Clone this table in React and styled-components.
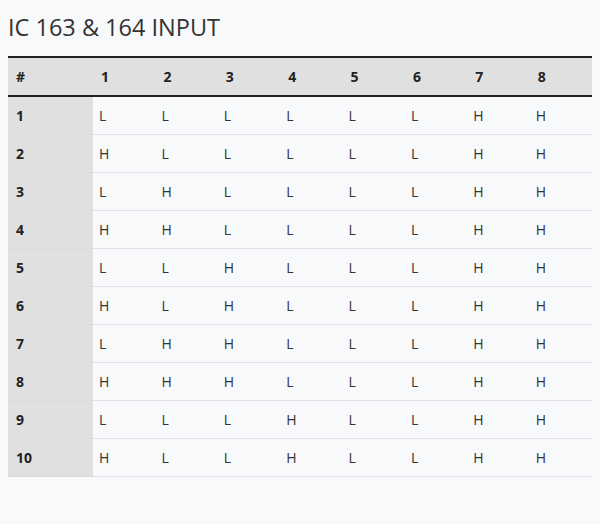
import styled, { createGlobalStyle } from "styled-components";

const rows = [
  "LLLLLLHH",
  "HLLLLLHH",
  "LHLLLLHH",
  "HHLLLLHH",
  "LLHLLLHH",
  "HLHLLLHH",
  "LHHLLLHH",
  "HHHLLLHH",
  "LLLHLLHH",
  "HLLHLLHH",
];

const cols = [1, 2, 3, 4, 5, 6, 7, 8];

const App = () => {
  return (
    <Page>
      <GlobalStyle />
      <Title>IC 163 &amp; 164 INPUT</Title>
      <Table>
        <colgroup>
          <FirstCol />
          {cols.map(n => (
            <col key={n} />
          ))}
        </colgroup>
        <thead>
          <tr>
            <HeadCell>#</HeadCell>
            {cols.map(n => (
              <HeadCell key={n}>{n}</HeadCell>
            ))}
          </tr>
        </thead>
        <tbody>
          {rows.map((r, i) => (
            <tr key={i}>
              <RowHead>{i + 1}</RowHead>
              {r.split("").map((v, j) => (
                <Cell key={j}>{v}</Cell>
              ))}
            </tr>
          ))}
        </tbody>
      </Table>
    </Page>
  );
};

export default App;

const GlobalStyle = createGlobalStyle`
  body {
    margin: 0;
    background: #f8f9fa;
    font-family: "Open Sans", "Noto Sans", sans-serif;
    color: #2b2b2b;
  }
`;
const Page = styled.div`
  padding: 12px 8px 20px;
`;
const Title = styled.h1`
  margin: 0 0 14px 0;
  font-size: 23.5px;
  font-weight: 400;
  line-height: 30px;
  color: #333;
`;
const Table = styled.table`
  width: 584px;
  border-collapse: collapse;
  table-layout: fixed;
  font-size: 14px;
`;
const FirstCol = styled.col`
  width: 85px;
`;
const HeadCell = styled.th`
  height: 37px;
  padding: 0 0 0 8px;
  text-align: left;
  background: #e0e0e0;
  border-top: 2px solid #222;
  border-bottom: 2px solid #222;
  font-weight: 700;
  font-size: 14px;
  color: #222;
`;
const RowHead = styled.td`
  height: 37px;
  padding: 0 0 0 8px;
  background: #e0e0e0;
  border-bottom: 1px solid #dadbde;
  font-weight: 700;
  color: #222;
`;
const Cell = styled.td`
  height: 37px;
  padding: 0 0 0 6px;
  border-bottom: 1px solid #dfe0e3;
  color: #333;
`;
